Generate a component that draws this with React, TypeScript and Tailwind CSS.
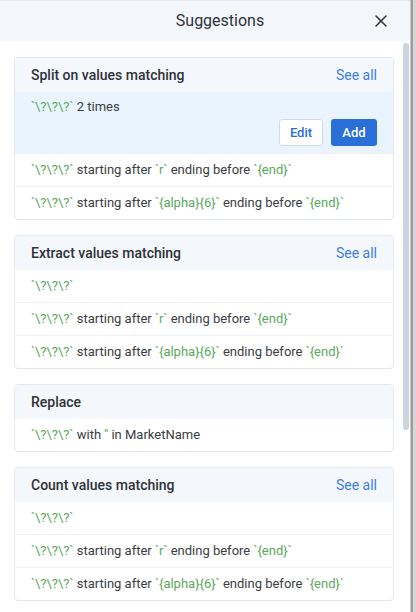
import { X } from "lucide-react";

type Part = { t: string; code?: boolean };

interface Section {
  title: string;
  seeAll: boolean;
  rows: Part[][];
  selected?: boolean;
}

const Q = "`\\?\\?\\?`";

const sections: Section[] = [
  {
    title: "Split on values matching",
    seeAll: true,
    selected: true,
    rows: [
      [{ t: Q, code: true }, { t: " 2 times" }],
      [{ t: Q, code: true }, { t: " starting after " }, { t: "`r`", code: true }, { t: " ending before " }, { t: "`{end}`", code: true }],
      [{ t: Q, code: true }, { t: " starting after " }, { t: "`{alpha}{6}`", code: true }, { t: " ending before " }, { t: "`{end}`", code: true }],
    ],
  },
  {
    title: "Extract values matching",
    seeAll: true,
    rows: [
      [{ t: Q, code: true }],
      [{ t: Q, code: true }, { t: " starting after " }, { t: "`r`", code: true }, { t: " ending before " }, { t: "`{end}`", code: true }],
      [{ t: Q, code: true }, { t: " starting after " }, { t: "`{alpha}{6}`", code: true }, { t: " ending before " }, { t: "`{end}`", code: true }],
    ],
  },
  {
    title: "Replace",
    seeAll: false,
    rows: [[{ t: Q, code: true }, { t: " with " }, { t: "''", code: true }, { t: " in MarketName" }]],
  },
  {
    title: "Count values matching",
    seeAll: true,
    rows: [
      [{ t: Q, code: true }],
      [{ t: Q, code: true }, { t: " starting after " }, { t: "`r`", code: true }, { t: " ending before " }, { t: "`{end}`", code: true }],
      [{ t: Q, code: true }, { t: " starting after " }, { t: "`{alpha}{6}`", code: true }, { t: " ending before " }, { t: "`{end}`", code: true }],
    ],
  },
];

const Line = ({ parts }: { parts: Part[] }) => (
  <span className="whitespace-pre">
    {parts.map((p, i) => (
      <span key={i} className={p.code ? "text-[#5ca85c]" : "text-[#3a3d42]"}>
        {p.t}
      </span>
    ))}
  </span>
);

const Card = ({ section }: { section: Section }) => (
  <div className="border border-[#e3e8ef] rounded-[4px] overflow-hidden bg-white">
    <div className="h-[34px] bg-[#f4f7fb] flex items-center justify-between px-4">
      <span className="text-[14px] font-medium text-[#2f3237]">{section.title}</span>
      {section.seeAll && <span className="text-[14px] text-[#3b80e0]">See all</span>}
    </div>
    {section.rows.map((row, i) =>
      section.selected && i === 0 ? (
        <div key={i} className="bg-[#eaf4fe] px-4 pt-[5px] pb-[7px]">
          <div className="text-[13px] leading-5">
            <Line parts={row} />
          </div>
          <div className="flex justify-end gap-2 mt-[2px]">
            <button className="h-[27px] w-[44px] rounded-[3px] border border-[#d3dae3] bg-white text-[13px] font-medium text-[#2a6fd8]">
              Edit
            </button>
            <button className="h-[27px] w-[46px] rounded-[3px] bg-[#2a6fd8] text-[13px] font-medium text-white">
              Add
            </button>
          </div>
        </div>
      ) : (
        <div
          key={i}
          className={`flex items-center px-4 text-[13px] ${i > 0 ? "h-[33px] border-t border-[#eef1f5]" : "h-[32px]"}`}
        >
          <Line parts={row} />
        </div>
      )
    )}
  </div>
);

export default function App() {
  return (
    <div className="w-[416px] h-[612px] flex bg-white overflow-hidden" style={{ fontFamily: "Roboto, 'Liberation Sans', sans-serif" }}>
      <div className="w-[410px] flex flex-col border-t border-[#e6e8eb]">
        <div className="h-[40px] shrink-0 bg-[#f3f7fc] flex items-center relative pl-[30px]">
          <div className="flex-1 text-center text-[16px] text-[#2f3237]">Suggestions</div>
          <X size={20} strokeWidth={1.8} className="text-[#2f3237] absolute right-[19px] top-[10px]" />
        </div>
        <div className="flex flex-1 min-h-0">
          <div className="w-[403px] pl-[14px] pr-[9px] pt-4 flex flex-col gap-[15px]">
            {sections.map((s, i) => (
              <Card key={i} section={s} />
            ))}
          </div>
          <div className="w-[7px] pt-[2px]">
            <div className="h-[387px] w-[6px] rounded-full bg-[#ccd4de]" />
          </div>
        </div>
      </div>
      <div className="w-[6px] flex">
        <div className="w-[1px] bg-[#c7c7c7]" />
        <div className="w-[2px] bg-[#9d9d9d]" />
        <div className="w-[3px] bg-[#d6d6d6]" />
      </div>
    </div>
  );
}
